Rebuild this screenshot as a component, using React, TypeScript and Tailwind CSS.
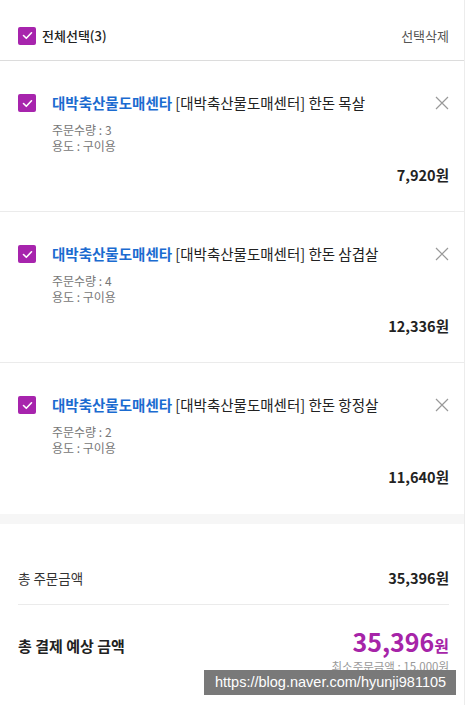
const items = [
  { name: "한돈 목살", qty: 3, price: "7,920원" },
  { name: "한돈 삼겹살", qty: 4, price: "12,336원" },
  { name: "한돈 항정살", qty: 2, price: "11,640원" },
];

function CheckBox() {
  return (
    <span className="flex h-[18px] w-[18px] shrink-0 items-center justify-center rounded-[2px] bg-[#a724ad]">
      <svg width="11" height="9" viewBox="0 0 11 9" fill="none">
        <path d="M1.5 4.5l2.8 2.8L9.5 1.8" stroke="#fff" strokeWidth="1.6" strokeLinecap="round" strokeLinejoin="round" />
      </svg>
    </span>
  );
}

function CloseIcon() {
  return (
    <svg width="14" height="14" viewBox="0 0 14 14" fill="none" className="mt-[3px] shrink-0">
      <path d="M1 1l12 12M13 1L1 13" stroke="#999" strokeWidth="1.2" />
    </svg>
  );
}

function CartItem({ item, last }: { item: (typeof items)[number]; last: boolean }) {
  return (
    <div className={`pl-[18px] pr-[15px] pt-[32px] ${last ? "pb-[27px]" : "border-b border-[#ebebeb] pb-[26px]"}`}>
      <div className="flex items-start">
        <span className="mt-[1px]">
          <CheckBox />
        </span>
        <div className="ml-[16px] flex-1 text-[14.5px] leading-[20px] text-[#222]">
          <span className="font-bold text-[#1b6bd0]">대박축산물도매센타</span> [대박축산물도매센터] {item.name}
        </div>
        <CloseIcon />
      </div>
      <div className="mt-[9px] pl-[34px] text-[12px] leading-[16px] text-[#777]">
        <p>주문수량 : {item.qty}</p>
        <p>용도 : 구이용</p>
      </div>
      <div className="mt-[11px] text-right text-[14.5px] font-bold leading-[20px] text-[#222]">{item.price}</div>
    </div>
  );
}

export default function App() {
  return (
    <div className="relative h-[705px] w-[466px] overflow-hidden bg-white font-['Noto_Sans_CJK_KR','Noto_Sans',sans-serif]">
      <div className="h-full w-[465px] border-r border-[#ececec]">
        <header className="flex h-[61px] items-center justify-between border-b border-[#dcdcdc] pl-[18px] pr-[15px] pt-[11px]">
          <div className="flex items-center gap-[6px]">
            <CheckBox />
            <span className="text-[13px] font-medium text-[#222]">전체선택(3)</span>
          </div>
          <span className="text-[13px] text-[#555]">선택삭제</span>
        </header>

        {items.map((item, i) => (
          <CartItem key={item.name} item={item} last={i === items.length - 1} />
        ))}

        <div className="h-[10px] bg-[#f6f6f6]" />

        <section className="pl-[18px] pr-[15px] pt-[44px]">
          <div className="flex items-center justify-between border-b border-[#ebebeb] pb-[16px] leading-[20px]">
            <span className="text-[13.5px] text-[#333]">총 주문금액</span>
            <span className="text-[14.5px] font-bold text-[#222]">35,396원</span>
          </div>
          <div className="flex items-center justify-between pt-[20px]">
            <span className="mt-[10px] text-[15px] font-bold text-[#222]">총 결제 예상 금액</span>
            <span className="font-bold text-[#a624a8]">
              <span className="text-[25px] leading-[32px]">35,396</span>
              <span className="text-[16px]">원</span>
            </span>
          </div>
          <p className="mt-[1px] text-right text-[11.5px] leading-[14px] text-[#999]">최소주문금액 : 15,000원</p>
        </section>
      </div>

      <div className="absolute left-[204px] top-[670px] flex h-[25px] w-[252px] items-center bg-[#797979] pl-[11px] font-['Liberation_Sans',sans-serif] text-[14.5px] text-white">
        https://blog.naver.com/hyunji981105
      </div>
    </div>
  );
}
